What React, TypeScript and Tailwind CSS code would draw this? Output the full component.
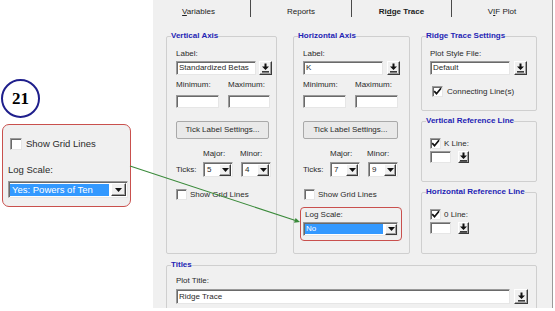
import React from "react";

const sunken =
  "bg-white border border-t-[#9a9a9a] border-l-[#9a9a9a] border-b-[#e6e6e6] border-r-[#e6e6e6] shadow-[inset_1px_1px_0_#6a6a6a]";
const raised =
  "bg-[#f0f0f0] border border-t-white border-l-white border-b-[#3a3a3a] border-r-[#3a3a3a] shadow-[inset_-1px_-1px_0_#a0a0a0]";

function DownloadIcon() {
  return (
    <svg width="9" height="10" viewBox="0 0 9 10">
      <path d="M3.5 0.5h2v3h2.5l-3.5 3.6l-3.5-3.6h2.5z" fill="#111" />
      <rect x="1" y="8.2" width="7" height="1.3" fill="#111" />
    </svg>
  );
}

function DlButton({ w = 13, h = 14 }: { w?: number; h?: number }) {
  return (
    <div className={raised + " flex items-center justify-center shrink-0"} style={{ width: w, height: h }}>
      <DownloadIcon />
    </div>
  );
}

function Tri() {
  return (
    <svg width="7" height="4" viewBox="0 0 7 4">
      <path d="M0 0h7l-3.5 4z" fill="#111" />
    </svg>
  );
}

function Select({ value, w }: { value: string; w: number }) {
  return (
    <div className={sunken + " h-[15px] flex items-center shrink-0"} style={{ width: w }}>
      <span className="flex-1 pl-[3px] text-[8px] leading-[10px]">{value}</span>
      <div className={raised + " w-[12px] h-[12px] mr-[1px] flex items-center justify-center"}>
        <Tri />
      </div>
    </div>
  );
}

function CheckMark() {
  return (
    <svg width="9" height="9" viewBox="0 0 9 9">
      <path d="M1.2 4.2l2.3 2.5L8 1.3" stroke="#111" strokeWidth="1.7" fill="none" />
    </svg>
  );
}

function Checkbox({ checked = false, size = 11 }: { checked?: boolean; size?: number }) {
  return (
    <div className={sunken + " flex items-center justify-center shrink-0"} style={{ width: size, height: size }}>
      {checked ? <CheckMark /> : null}
    </div>
  );
}

function Group({
  title,
  className,
  children,
}: {
  title: string;
  className: string;
  children?: React.ReactNode;
}) {
  return (
    <fieldset className={"border border-[#cfcfcf] rounded-[2px] m-0 p-0 min-w-0 shrink-0 " + className}>
      <legend className="ml-[4px] p-0 text-[8px] font-bold text-[#2424b4] leading-[10px] whitespace-nowrap">
        {title}
      </legend>
      {children}
    </fieldset>
  );
}

function TickButton({ w }: { w: number }) {
  return (
    <div
      className="h-[18px] shrink-0 border border-[#a9a9a9] rounded-[2px] bg-[#e9e9e9] flex items-center justify-center text-[8px] leading-[10px]"
      style={{ width: w }}
    >
      Tick Label Settings...
    </div>
  );
}

function AxisGroup({
  title,
  label,
  minorGap,
  inputGap,
  maxW,
  tickW,
  major,
  minor,
  cbMl,
  children,
  w,
}: {
  title: string;
  label: string;
  minorGap: number;
  inputGap: number;
  maxW: number;
  tickW: number;
  major: string;
  minor: string;
  cbMl: number;
  children?: React.ReactNode;
  w: string;
}) {
  return (
    <Group title={title} className={w + " h-[223px]"}>
      <div className="pl-[9px] pt-[8px] flex flex-col text-[8px] leading-[10px]">
        <div>Label:</div>
        <div className="mt-[2px] flex">
          <div className={sunken + " w-[80px] h-[14px] pl-[2px] flex items-center"}>{label}</div>
          <div style={{ marginLeft: inputGap }}>
            <DlButton />
          </div>
        </div>
        <div className="mt-[5px] flex">
          <span className="w-[52px]">Minimum:</span>
          <span>Maximum:</span>
        </div>
        <div className="mt-[5px] flex">
          <div className={sunken + " w-[43px] h-[13px]"} />
          <div className={sunken + " ml-[9px] h-[13px]"} style={{ width: maxW }} />
        </div>
        <div className="mt-[13px]">
          <TickButton w={tickW} />
        </div>
        <div className="mt-[10px] flex pl-[27px]">
          <span className="w-[37px]">Major:</span>
          <span>Minor:</span>
        </div>
        <div className="mt-[3px] flex items-center">
          <span className="w-[27px]">Ticks:</span>
          <Select value={major} w={30} />
          <div style={{ marginLeft: minorGap }}>
            <Select value={minor} w={30} />
          </div>
        </div>
        <div className="mt-[12px] flex items-center" style={{ marginLeft: cbMl }}>
          <Checkbox />
          <span className="ml-[3px]">Show Grid Lines</span>
        </div>
        {children}
      </div>
    </Group>
  );
}

function Tabs() {
  return (
    <div className="h-[20px] flex shrink-0 text-[8px] leading-[10px] text-[#222]">
      <div className="w-[98px] h-[17px] border-r border-[#4a4a4a] flex justify-center pt-[7px] pr-[6px]">
        <span>
          <span className="underline">V</span>ariables
        </span>
      </div>
      <div className="w-[101px] h-[17px] border-r border-[#4a4a4a] flex justify-center pt-[7px]">
        <span>Reports</span>
      </div>
      <div className="w-[100px] h-[17px] border-r border-[#4a4a4a] flex justify-center pt-[7px] font-bold">
        <span>
          Ri<span className="underline">d</span>ge Trace
        </span>
      </div>
      <div className="w-[100px] h-[17px] flex justify-center pt-[7px]">
        <span>
          V<span className="underline">I</span>F Plot
        </span>
      </div>
    </div>
  );
}

export default function App() {
  return (
    <div className="relative w-[555px] h-[311px] bg-white overflow-hidden flex font-['Liberation_Sans',Arial,sans-serif] text-[#2a2a2a]">
      {/* Left callout column */}
      <div className="w-[153px] shrink-0 flex flex-col">
        <div className="mt-[79px] ml-[1px] w-[39px] h-[39px] rounded-full border-2 border-[#1f1f8c] flex items-center justify-center font-['Liberation_Serif',serif] font-bold text-[17px] leading-none text-black">
          21
        </div>
        <div className="mt-[6px] ml-[2px] w-[129px] h-[83px] rounded-[7px] border border-[#c9504d] bg-[#f0f0f0] flex flex-col pl-[5px] pt-[13px] text-[9.5px] leading-[12px]">
          <div className="ml-[2px] flex items-center">
            <Checkbox size={12} />
            <span className="ml-[4px]">Show Grid Lines</span>
          </div>
          <div className="mt-[14px]">Log Scale:</div>
          <div className={sunken + " mt-[5px] w-[120px] h-[17px] flex items-center"}>
            <div className="ml-[1px] w-[99px] h-[12px] bg-[#3399ff] text-white pl-[2px] flex items-center">
              Yes: Powers of Ten
            </div>
            <div className={raised + " ml-[2px] w-[15px] h-[13px] flex items-center justify-center"}>
              <Tri />
            </div>
          </div>
        </div>
      </div>

      {/* Dialog */}
      <div className="w-[400px] h-[308px] shrink-0 bg-[#f0f0f0] border-r border-[#9a9a9a] flex flex-col overflow-hidden">
        <Tabs />
        <div className="pl-[13px] mt-[11px] flex">
          <AxisGroup
            title="Vertical Axis"
            label="Standardized Betas"
            w="w-[111px]"
            inputGap={3}
            maxW={42}
            tickW={93}
            major="5"
            minor="4"
            minorGap={8}
            cbMl={0}
          />
          <div className="ml-[16px]">
            <AxisGroup
              title="Horizontal Axis"
              label="K"
              w="w-[117px]"
              inputGap={4}
              maxW={43}
              tickW={95}
              major="7"
              minor="9"
              minorGap={8}
              cbMl={1}
            >
              <div className="mt-[7px] -ml-[3px] w-[102px] h-[34px] rounded-[4px] border border-[#c9504d] flex flex-col pl-[2px] pt-[2px]">
                <div className="ml-[2px]">Log Scale:</div>
                <div className={sunken + " mt-[2px] w-[95px] h-[14px] flex items-center"}>
                  <div className="ml-[1px] w-[78px] h-[10px] bg-[#3399ff] text-white pl-[1px] flex items-center">No</div>
                  <div className={raised + " ml-[2px] w-[12px] h-[11px] flex items-center justify-center"}>
                    <Tri />
                  </div>
                </div>
              </div>
            </AxisGroup>
          </div>
          <div className="ml-[11px] flex flex-col">
            <Group title="Ridge Trace Settings" className="w-[116px] h-[80px]">
              <div className="pl-[8px] pt-[8px] flex flex-col text-[8px] leading-[10px]">
                <div>Plot Style File:</div>
                <div className="mt-[2px] flex">
                  <div className={sunken + " w-[80px] h-[14px] pl-[2px] flex items-center"}>Default</div>
                  <div className="ml-[4px]">
                    <DlButton />
                  </div>
                </div>
                <div className="mt-[11px] ml-[2px] flex items-center">
                  <Checkbox checked />
                  <span className="ml-[4px]">Connecting Line(s)</span>
                </div>
              </div>
            </Group>
            <Group title="Vertical Reference Line" className="mt-[5px] w-[116px] h-[66px]">
              <div className="pl-[8px] pt-[12px] flex flex-col text-[8px] leading-[10px]">
                <div className="flex items-center">
                  <Checkbox checked />
                  <span className="ml-[3px]">K Line:</span>
                </div>
                <div className="mt-[2px] flex">
                  <div className={sunken + " w-[21px] h-[12px]"} />
                  <div className="ml-[7px]">
                    <DlButton w={11} h={12} />
                  </div>
                </div>
              </div>
            </Group>
            <Group title="Horizontal Reference Line" className="mt-[5px] w-[116px] h-[67px]">
              <div className="pl-[8px] pt-[12px] flex flex-col text-[8px] leading-[10px]">
                <div className="flex items-center">
                  <Checkbox checked />
                  <span className="ml-[3px]">0 Line:</span>
                </div>
                <div className="mt-[2px] flex">
                  <div className={sunken + " w-[21px] h-[12px]"} />
                  <div className="ml-[7px]">
                    <DlButton w={11} h={12} />
                  </div>
                </div>
              </div>
            </Group>
          </div>
        </div>
        <div className="ml-[13px] mt-[6px]">
          <Group title="Titles" className="w-[371px] h-[60px]">
            <div className="pl-[9px] pt-[6px] flex flex-col text-[8px] leading-[10px]">
              <div>Plot Title:</div>
              <div className="mt-[3px] flex">
                <div className={sunken + " w-[334px] h-[15px] pl-[2px] flex items-center"}>Ridge Trace</div>
                <div className="ml-[4px]">
                  <DlButton w={14} h={15} />
                </div>
              </div>
            </div>
          </Group>
        </div>
      </div>

      {/* Connector arrow overlay */}
      <svg className="absolute inset-0 pointer-events-none" width="555" height="311" viewBox="0 0 555 311">
        <line x1="130" y1="166" x2="297" y2="221" stroke="#3a8a3a" strokeWidth="1.1" />
        <polygon points="300,222 295.6,217.9 294,222.7" fill="#3a8a3a" />
      </svg>
    </div>
  );
}
